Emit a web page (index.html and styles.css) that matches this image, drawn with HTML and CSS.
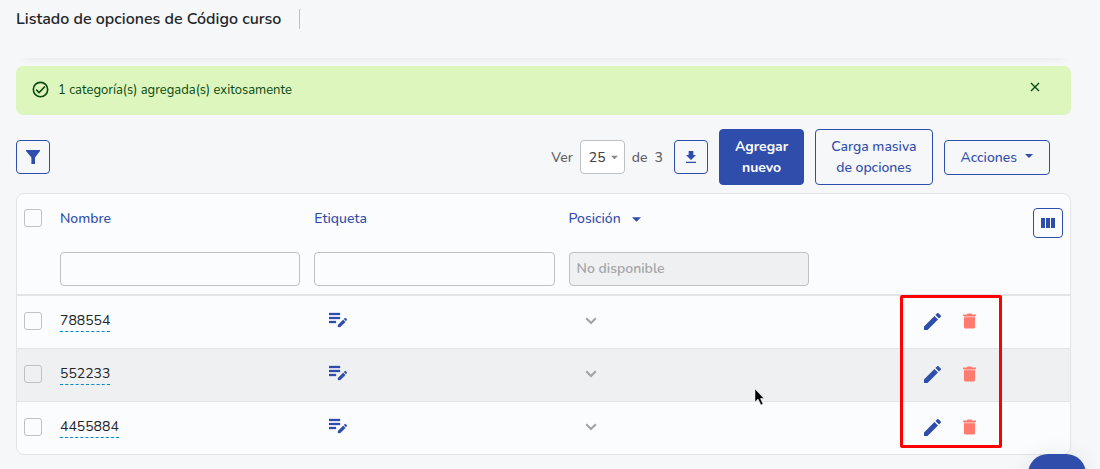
FILE: index.html
```html
<!DOCTYPE html>
<html lang="es">
<head>
  <meta charset="UTF-8">
  <meta name="viewport" content="width=device-width, initial-scale=1">
  <title>Listado de opciones de Código curso</title>
  <link rel="stylesheet" href="styles.css">
</head>
<body>

  <!-- Iconos -->
  <svg class="sprite" aria-hidden="true">
    <symbol id="i-check" viewBox="0 0 18 18"><circle cx="9" cy="9" r="7.6" fill="none" stroke="currentColor" stroke-width="1.7"/><path d="M4.4 9.2l3.1 3.1 6.2-6.5" fill="none" stroke="currentColor" stroke-width="1.7"/></symbol>
    <symbol id="i-close" viewBox="0 0 10 10"><path d="M1 1l8 8M9 1L1 9" fill="none" stroke="currentColor" stroke-width="1.4"/></symbol>
    <symbol id="i-filter" viewBox="0 0 14 14"><path d="M0 0h14v1L9 7.6V14H5.4V7.6L0 1z" fill="currentColor"/></symbol>
    <symbol id="i-download" viewBox="0 0 24 24"><path d="M19.5 9H15.500V3h-7v6H4.500L12 16.500zM4.500 19v2h15v-2z" fill="currentColor"/></symbol>
    <symbol id="i-caret" viewBox="0 0 10 5"><path d="M0 0h10L5 5z" fill="currentColor"/></symbol>
    <symbol id="i-columns" viewBox="0 0 14 10"><path d="M0 0h4v10H0zM5 0h4v10H5zM10 0h4v10h-4z" fill="currentColor"/></symbol>
    <symbol id="i-label" viewBox="0 0 18 16"><path d="M0 1h11v2H0zM0 5h11v2H0zM0 9h7v2H0zM9 13l5.200-5.200 2.200 2.200L11.200 15H9zM14.900 7.100l.9-.9q.5-.4 1 0l1 1q.3.400 0 .8l-.8.900z" fill="currentColor" stroke="currentColor" stroke-width=".3"/></symbol>
    <symbol id="i-down" viewBox="0 0 12 8"><path d="M1.200 1.200L6 6l4.800-4.800" fill="none" stroke="currentColor" stroke-width="2.200"/></symbol>
    <symbol id="i-edit" viewBox="3 3 18 18"><path d="M3 17.250V21h3.750L17.810 9.940l-3.750-3.750zM20.710 7.040a1 1 0 0 0 0-1.410l-2.340-2.340a1 1 0 0 0-1.410 0l-1.830 1.830 3.750 3.750z" fill="currentColor"/></symbol>
    <symbol id="i-trash" viewBox="0 0 14 16"><path d="M1 4h12v10.500q0 1.500-1.500 1.500h-9Q1 16 1 14.500zM0 1h4l1-1h4l1 1h4v1.600H0z" fill="currentColor"/><path d="M1 2.600h12V4H1z" fill="currentColor" opacity=".6"/></symbol>
  </svg>

  <div class="page">
    <header class="page-header">
      <h1>Listado de opciones de Código curso</h1>
    </header>

    <div class="alert" role="status">
      <svg class="alert-icon"><use href="#i-check"/></svg>
      <span class="alert-text">1 categoría(s) agregada(s) exitosamente</span>
      <button class="alert-close" type="button" aria-label="Cerrar"><svg><use href="#i-close"/></svg></button>
    </div>

    <div class="toolbar">
      <button class="btn btn-icon" type="button" aria-label="Filtrar"><svg class="icon-filter"><use href="#i-filter"/></svg></button>

      <div class="toolbar-right">
        <div class="pager">
          <label for="porPagina">Ver</label>
          <span class="select">
            <select id="porPagina">
              <option>25</option>
              <option>50</option>
              <option>100</option>
            </select>
            <svg><use href="#i-caret"/></svg>
          </span>
          <span>de</span>
          <span>3</span>
        </div>
        <button class="btn btn-icon" type="button" aria-label="Descargar"><svg class="icon-download"><use href="#i-download"/></svg></button>
        <button class="btn btn-primary" type="button">Agregar<br>nuevo</button>
        <button class="btn" type="button">Carga masiva<br>de opciones</button>
        <button class="btn btn-menu" type="button">Acciones <svg class="icon-caret"><use href="#i-caret"/></svg></button>
      </div>
    </div>

    <div class="table-box">
      <table>
        <thead>
          <tr class="titles">
            <th class="col-check"><input type="checkbox" aria-label="Seleccionar todo"></th>
            <th><a href="#">Nombre</a></th>
            <th><a href="#">Etiqueta</a></th>
            <th><a href="#">Posición <svg class="icon-sort"><use href="#i-caret"/></svg></a></th>
            <th class="col-tools"><button class="btn btn-columns" type="button" aria-label="Columnas"><svg><use href="#i-columns"/></svg></button></th>
          </tr>
          <tr class="filters">
            <td></td>
            <td><input type="text" aria-label="Filtrar por nombre"></td>
            <td><input type="text" aria-label="Filtrar por etiqueta"></td>
            <td><input type="text" aria-label="Filtrar por posición" placeholder="No disponible" disabled></td>
            <td></td>
          </tr>
        </thead>
        <tbody>
          <tr>
            <td class="col-check"><input type="checkbox" aria-label="Seleccionar 788554"></td>
            <td><a class="editable" href="#">788554</a></td>
            <td><button class="action label" type="button" aria-label="Editar etiqueta"><svg><use href="#i-label"/></svg></button></td>
            <td><button class="action down" type="button" aria-label="Bajar"><svg><use href="#i-down"/></svg></button></td>
            <td>
              <div class="actions">
                <button class="action edit" type="button" aria-label="Editar"><svg><use href="#i-edit"/></svg></button>
                <button class="action trash" type="button" aria-label="Eliminar"><svg><use href="#i-trash"/></svg></button>
              </div>
            </td>
          </tr>
          <tr>
            <td class="col-check"><input type="checkbox" aria-label="Seleccionar 552233"></td>
            <td><a class="editable" href="#">552233</a></td>
            <td><button class="action label" type="button" aria-label="Editar etiqueta"><svg><use href="#i-label"/></svg></button></td>
            <td><button class="action down" type="button" aria-label="Bajar"><svg><use href="#i-down"/></svg></button></td>
            <td>
              <div class="actions">
                <button class="action edit" type="button" aria-label="Editar"><svg><use href="#i-edit"/></svg></button>
                <button class="action trash" type="button" aria-label="Eliminar"><svg><use href="#i-trash"/></svg></button>
              </div>
            </td>
          </tr>
          <tr>
            <td class="col-check"><input type="checkbox" aria-label="Seleccionar 4455884"></td>
            <td><a class="editable" href="#">4455884</a></td>
            <td><button class="action label" type="button" aria-label="Editar etiqueta"><svg><use href="#i-label"/></svg></button></td>
            <td><button class="action down" type="button" aria-label="Bajar"><svg><use href="#i-down"/></svg></button></td>
            <td>
              <div class="actions">
                <button class="action edit" type="button" aria-label="Editar"><svg><use href="#i-edit"/></svg></button>
                <button class="action trash" type="button" aria-label="Eliminar"><svg><use href="#i-trash"/></svg></button>
              </div>
            </td>
          </tr>
        </tbody>
      </table>
      <div class="highlight"></div>
      <svg class="pointer" viewBox="0 0 11 18" aria-hidden="true"><path d="M1 1v13l3-3 3 6 2-1-2.600-5.500H10z" fill="#000" stroke="#fff" stroke-width=".5"/></svg>
    </div>
  </div>

  <button class="fab" type="button" aria-label="Ayuda"></button>

</body>
</html>
```
FILE: styles.css
```css
* {
  box-sizing: border-box;
}

body {
  margin: 0;
  background-color: #f6f7f9;
  font-family: Nunito, "Open Sans", "Noto Sans", sans-serif;
  font-size: 14px;
  color: #212529;
}

button, input, select {
  font: inherit;
  color: inherit;
}

button {
  cursor: pointer;
}

svg {
  display: block;
}

a {
  color: inherit;
  text-decoration: none;
}

.sprite {
  position: absolute;
  width: 0;
  height: 0;
}

.page {
  padding: 0 29px 14px 16px;
}

.page-header {
  display: flex;
  height: 58px;
  padding-top: 9px;
  margin-bottom: 8px;
  box-shadow: 0 8px 8px -8px rgba(0, 0, 0, 0.08);
}

h1 {
  height: 20px;
  margin: 0;
  padding-right: 18px;
  border-right: 1px solid #bfc1c4;
  font-size: 16px;
  font-weight: 600;
  line-height: 20px;
}

/* Aviso */
.alert {
  display: flex;
  align-items: center;
  gap: 9px;
  height: 49px;
  padding: 0 30px 2px 16px;
  border-radius: 7px;
  background-color: #ddf6be;
  color: #0a4a0f;
  font-size: 13px;
}

.alert-icon {
  width: 17px;
  height: 17px;
}

.alert-text {
  flex: 1;
}

.alert-close {
  padding: 1px;
  margin-bottom: 6px;
  border: none;
  background: none;
}

.alert-close svg {
  width: 10px;
  height: 10px;
}

/* Barra de herramientas */
.toolbar {
  display: flex;
  align-items: center;
  justify-content: space-between;
  margin: 14px 21px 8px 0;
}

.toolbar-right {
  display: flex;
  align-items: center;
  gap: 11px;
}

.pager {
  display: flex;
  align-items: center;
  gap: 7px;
  color: #5d6064;
  font-weight: 500;
}

.select {
  display: grid;
  align-items: center;
}

.select select, .select svg {
  grid-area: 1 / 1;
}

.select select {
  width: 45px;
  height: 34px;
  padding: 0 8px;
  border: 1px solid #bfc1c4;
  border-radius: 4px;
  background-color: #fff;
  color: #444;
  appearance: none;
}

.select svg {
  justify-self: end;
  width: 7px;
  height: 5px;
  margin-right: 7px;
  color: #888;
  pointer-events: none;
}

.btn {
  display: flex;
  align-items: center;
  justify-content: center;
  gap: 8px;
  padding: 6px 15px;
  border: 1px solid #2f4dab;
  border-radius: 4px;
  background-color: transparent;
  color: #2f4dab;
  font-weight: 500;
  line-height: 21px;
}

.btn-primary {
  background-color: #2f4dab;
  color: #fff;
  font-weight: 700;
}

.btn-icon {
  width: 34px;
  height: 34px;
  padding: 0;
}

.btn-menu {
  padding: 6px 16px;
}

.btn-columns {
  width: 30px;
  height: 30px;
  padding: 0;
  margin-left: auto;
}

.btn-columns svg {
  width: 14px;
  height: 10px;
}

.icon-filter {
  width: 14px;
  height: 14px;
}

.icon-download {
  width: 16px;
  height: 16px;
}

.icon-caret {
  width: 8px;
  height: 4px;
  margin-bottom: 3px;
}

.icon-sort {
  display: inline-block;
  width: 9px;
  height: 5px;
  margin-left: 8px;
  vertical-align: 1px;
}

/* Tabla */
.table-box {
  position: relative;
  border: 1px solid #e2e4e7;
  border-radius: 8px;
  background-color: #fbfcfe;
}

table {
  width: 100%;
  table-layout: fixed;
  border-collapse: separate;
  border-spacing: 0;
}

th, td {
  padding: 0 7px;
  text-align: left;
}

th {
  color: #2f4dab;
  font-weight: 500;
}

.titles th {
  height: 49px;
}

.titles .col-check {
  padding-bottom: 2px;
}

.titles .col-tools {
  padding-top: 14px;
  vertical-align: top;
}

.filters td {
  height: 53px;
  border-bottom: 2px solid #e2e4e7;
}

tbody td {
  height: 53px;
  padding-bottom: 2px;
  border-bottom: 1px solid #e2e4e7;
}

tbody tr:last-child td {
  height: 52px;
  border-bottom: none;
}

tbody tr:nth-child(even) {
  background-color: #eff0f2;
}

.col-check {
  width: 36px;
}

input[type="checkbox"] {
  display: block;
  width: 18px;
  height: 18px;
  margin: 0;
  border: 1px solid #bfc1c4;
  border-radius: 3px;
  appearance: none;
}

input[type="text"] {
  display: block;
  width: 100%;
  height: 34px;
  padding: 0 7px;
  border: 1px solid #bfc1c4;
  border-radius: 4px;
  background-color: transparent;
}

input[type="text"]:disabled {
  background-color: #eff0f2;
}

input::placeholder {
  color: #a3a5a8;
  font-weight: 600;
}

.editable {
  display: inline-block;
  border-bottom: 1px dashed #0088cc;
  line-height: 20px;
}

.action {
  display: block;
  padding: 0;
  border: none;
  background: none;
  color: #2f4dab;
}

.label {
  margin: 0 0 2px 15px;
}

.label svg {
  width: 18px;
  height: 16px;
}

.down {
  margin-left: 16px;
  color: #a3a5a8;
}

.down svg {
  width: 12px;
  height: 8px;
}

.actions {
  display: flex;
  align-items: center;
  justify-content: flex-end;
  gap: 22px;
  padding-right: 87px;
}

.edit svg {
  width: 17px;
  height: 17px;
}

.trash {
  color: #ff7b70;
}

.trash svg {
  width: 13px;
  height: 16px;
}

/* Marco rojo y puntero sobre la tabla */
.highlight {
  position: absolute;
  top: 101px;
  right: 68px;
  width: 102px;
  height: 153px;
  border: 3px solid #f00;
  border-radius: 2px;
  pointer-events: none;
}

.pointer {
  position: absolute;
  top: 194px;
  left: 737px;
  width: 11px;
  height: 18px;
}

.fab {
  position: fixed;
  right: 14px;
  bottom: -43px;
  width: 58px;
  height: 58px;
  border: none;
  border-radius: 20px;
  background-color: #2f4dab;
  box-shadow: 0 0 20px rgba(0, 0, 0, 0.08);
}
```
